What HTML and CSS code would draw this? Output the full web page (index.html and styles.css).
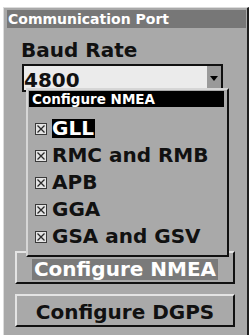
FILE: index.html
```html
<!DOCTYPE html>
<html lang="en">
<head>
    <meta charset="UTF-8">
    <meta name="viewport" content="width=device-width, initial-scale=1.0">
    <title>Communication Port</title>
    <link rel="stylesheet" href="styles.css">
</head>
<body>
    <div class="window">
        <div class="titlebar">Communication Port</div>

        <div class="field-label">Baud Rate</div>
        <div class="select">
            <span class="select-value">4800</span>
            <span class="select-arrow"></span>
        </div>

        <button class="btn btn-first"><span class="btn-focus">Configure NMEA</span></button>
        <button class="btn">Configure DGPS</button>

        <!-- NMEA sentence menu, open over the dialog -->
        <div class="popup">
            <div class="popup-title">Configure NMEA</div>
            <ul class="nmea-list">
                <li class="nmea-item">
                    <svg class="check" viewBox="0 0 12 12"><rect x="0.5" y="0.5" width="11" height="11" fill="#e4e4e4" stroke="#3a3a3a"/><path d="M2.5 2.5 L9.5 9.5 M9.5 2.5 L2.5 9.5" stroke="#2a2a2a" stroke-width="1.3"/></svg>
                    <span class="nmea-name selected">GLL</span>
                </li>
                <li class="nmea-item">
                    <svg class="check" viewBox="0 0 12 12"><rect x="0.5" y="0.5" width="11" height="11" fill="#e4e4e4" stroke="#3a3a3a"/><path d="M2.5 2.5 L9.5 9.5 M9.5 2.5 L2.5 9.5" stroke="#2a2a2a" stroke-width="1.3"/></svg>
                    <span class="nmea-name">RMC and RMB</span>
                </li>
                <li class="nmea-item">
                    <svg class="check" viewBox="0 0 12 12"><rect x="0.5" y="0.5" width="11" height="11" fill="#e4e4e4" stroke="#3a3a3a"/><path d="M2.5 2.5 L9.5 9.5 M9.5 2.5 L2.5 9.5" stroke="#2a2a2a" stroke-width="1.3"/></svg>
                    <span class="nmea-name">APB</span>
                </li>
                <li class="nmea-item">
                    <svg class="check" viewBox="0 0 12 12"><rect x="0.5" y="0.5" width="11" height="11" fill="#e4e4e4" stroke="#3a3a3a"/><path d="M2.5 2.5 L9.5 9.5 M9.5 2.5 L2.5 9.5" stroke="#2a2a2a" stroke-width="1.3"/></svg>
                    <span class="nmea-name">GGA</span>
                </li>
                <li class="nmea-item">
                    <svg class="check" viewBox="0 0 12 12"><rect x="0.5" y="0.5" width="11" height="11" fill="#e4e4e4" stroke="#3a3a3a"/><path d="M2.5 2.5 L9.5 9.5 M9.5 2.5 L2.5 9.5" stroke="#2a2a2a" stroke-width="1.3"/></svg>
                    <span class="nmea-name">GSA and GSV</span>
                </li>
            </ul>
        </div>
    </div>
</body>
</html>
```

FILE: styles.css
```css
body {
    margin: 0;
    padding: 7px 0 0 3px;
    background-color: #ffffff;
    font-family: "DejaVu Sans", sans-serif;
    font-weight: bold;
    color: #111;
    overflow: hidden;
}

.window {
    position: relative;
    box-sizing: border-box;
    width: 246px;
    height: 340px;
    padding: 2px 1px 0 3px;
    background-color: #a9a9a9;
    border-left: 1px solid #dcdcdc;
    border-top: 1px solid #dcdcdc;
    border-right: 2px solid #1e1e1e;
}

.titlebar {
    height: 18px;
    line-height: 18px;
    padding-left: 1px;
    font-size: 14px;
    color: #fff;
    background-color: #777;
    white-space: nowrap;
}

.field-label {
    margin: 11px 0 0 14px;
    font-size: 20px;
    line-height: 23px;
}

.select {
    display: flex;
    box-sizing: border-box;
    width: 201px;
    height: 28px;
    margin: 2px 0 0 15px;
    background-color: #ebebeb;
    border: 2px solid #111;
}

.select-value {
    flex: 1;
    padding-top: 3px;
    font-size: 20px;
    line-height: 23px;
}

.select-arrow {
    display: flex;
    align-items: center;
    justify-content: center;
    width: 14px;
    background-color: #9a9a9a;
}

.select-arrow::after {
    content: "";
    margin-top: 1px;
    border-left: 4px solid transparent;
    border-right: 4px solid transparent;
    border-top: 5px solid #000;
}

.btn {
    display: block;
    box-sizing: border-box;
    width: 220px;
    height: 33px;
    margin: 10px 0 0 8px;
    padding: 3px 0 0 0;
    font: inherit;
    font-size: 20px;
    line-height: 21px;
    color: #111;
    text-align: center;
    background-color: #a9a9a9;
    border-top: 2px solid #e4e4e4;
    border-left: 2px solid #e4e4e4;
    border-right: 2px solid #111;
    border-bottom: 2px solid #111;
}

.btn-first {
    margin-top: 159px;
}

.btn-focus {
    display: inline-block;
    padding: 0 2px;
    color: #fff;
    background-color: #7a7a7a;
}

.popup {
    position: absolute;
    left: 22px;
    top: 80px;
    box-sizing: border-box;
    width: 203px;
    height: 169px;
    background-color: #a9a9a9;
    border-top: 2px solid #d6d6d6;
    border-left: 2px solid #d6d6d6;
    border-right: 2px solid #111;
    border-bottom: 2px solid #111;
}

.popup-title {
    height: 16px;
    margin: 1px 3px 0 1px;
    padding-left: 3px;
    font-size: 13.5px;
    line-height: 16px;
    color: #fff;
    background-color: #000;
}

.nmea-list {
    list-style: none;
    margin: 8px 0 0 7px;
    padding: 0;
}

.nmea-item {
    display: flex;
    align-items: flex-start;
    height: 27px;
}

.check {
    width: 12px;
    height: 12px;
    margin: 8px 5px 0 0;
    flex-shrink: 0;
}

.nmea-name {
    margin-top: 4px;
    font-size: 20px;
    line-height: 19px;
    white-space: nowrap;
}

.nmea-name.selected {
    padding-right: 1px;
    color: #fff;
    background-color: #000;
}
```
